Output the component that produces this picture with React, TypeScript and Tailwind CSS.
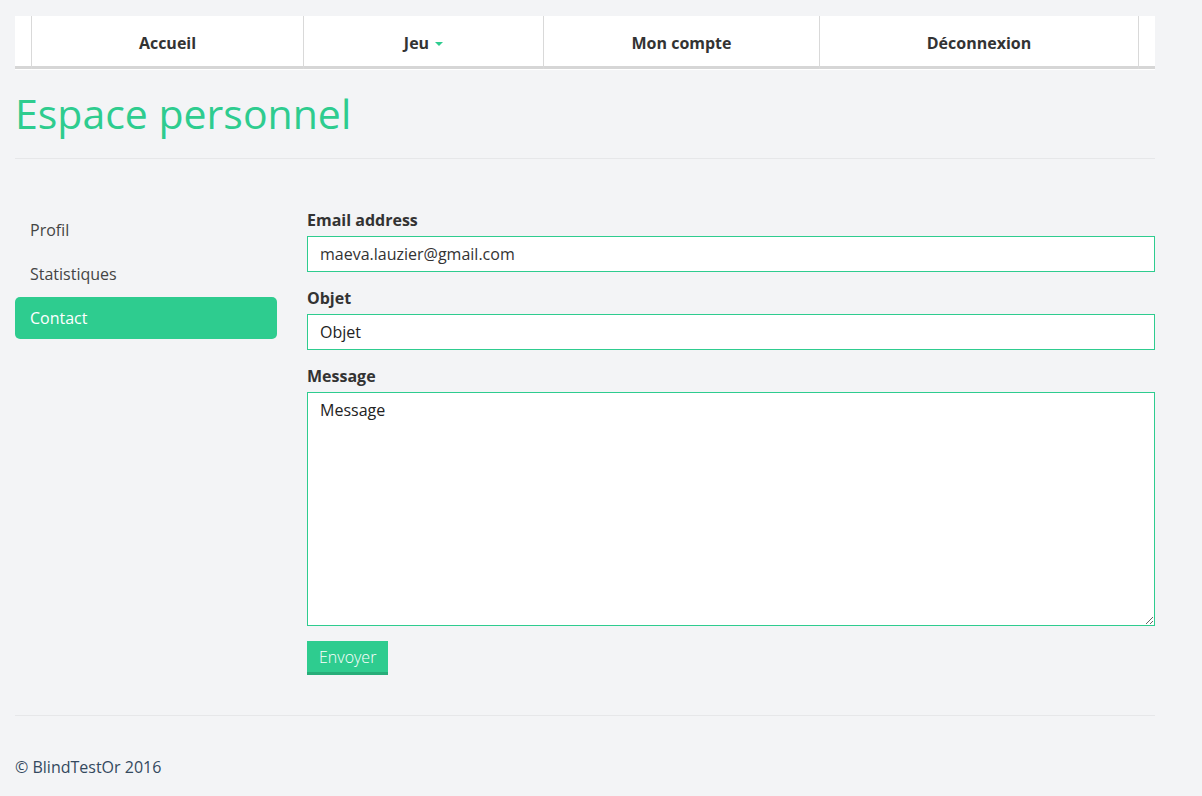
import React from "react";

const navItems = [
  { label: "Accueil", w: "w-[272px]" },
  { label: "Jeu", w: "w-[240px]", caret: true },
  { label: "Mon compte", w: "w-[276px]" },
  { label: "Déconnexion", w: "w-[319px]" },
];

export default function App() {
  return (
    <div
      className="min-h-[796px] bg-[#f3f4f6] text-[#333333] pt-4"
      style={{ fontFamily: '"Open Sans", "Noto Sans", sans-serif' }}
    >
      <div className="w-[1140px] ml-[15px]">
        {/* Navbar */}
        <div className="bg-white pb-px">
          <div className="flex h-[53px] border-b-[3px] border-[#d6d6d6]">
            <div className="w-[17px] border-r border-[#d9d9d9] -mb-[3px]" />
            {navItems.map((it) => (
              <div
                key={it.label}
                className={`${it.w} border-r border-[#d9d9d9] -mb-[3px] flex items-center justify-center text-[16px] font-bold text-[#333333]`}
              >
                <span>{it.label}</span>
                {it.caret && (
                  <span className="ml-[6px] mt-[2px] inline-block w-0 h-0 border-l-[4px] border-r-[4px] border-t-[4px] border-l-transparent border-r-transparent border-t-[#2ecc8f]" />
                )}
              </div>
            ))}
            <div className="flex-1" />
          </div>
        </div>

        {/* Page header */}
        <div className="mt-[20px] pb-[22px] border-b border-[#e6e7e9]">
          <h1 className="text-[41px] leading-[46px] font-normal text-[#2ecc8f]">
            Espace personnel
          </h1>
        </div>

        {/* Content */}
        <div className="flex mt-[50px]">
          <div className="w-[262px] flex flex-col gap-[2px] text-[16px]">
            <div className="h-[42px] px-[15px] flex items-center text-[#444]">Profil</div>
            <div className="h-[42px] px-[15px] flex items-center text-[#444]">Statistiques</div>
            <div className="h-[42px] px-[15px] flex items-center bg-[#2ecc8f] text-white rounded-[5px]">
              Contact
            </div>
          </div>
          <div className="ml-[30px] flex-1 flex flex-col">
            <label className="text-[16px] font-bold leading-[22px] mb-[5px]">Email address</label>
            <input
              readOnly
              value="maeva.lauzier@gmail.com"
              className="h-[36px] border border-[#2ecc8f] bg-white px-[12px] text-[16px] text-[#333] outline-none"
            />
            <label className="mt-[15px] text-[16px] font-bold leading-[22px] mb-[5px]">Objet</label>
            <input
              readOnly
              value="Objet"
              className="h-[36px] border border-[#2ecc8f] bg-white px-[12px] text-[16px] text-[#222] outline-none"
            />
            <label className="mt-[15px] text-[16px] font-bold leading-[22px] mb-[5px]">Message</label>
            <textarea
              readOnly
              value="Message"
              className="h-[234px] border border-[#2ecc8f] bg-white px-[12px] py-[6px] text-[16px] leading-[22px] text-[#222] outline-none"
            />
            <div className="mt-[15px]">
              <button className="h-[34px] px-[12px] bg-[#2ecc8f] border-b-[3px] border-[#27ad79] text-white text-[16px] font-light leading-[33px]">
                Envoyer
              </button>
            </div>
          </div>
        </div>

        {/* Footer */}
        <div className="mt-[40px] border-t border-[#e6e7e9] pt-[39px] text-[16px] text-[#34495e]">
          © BlindTestOr 2016
        </div>
      </div>
    </div>
  );
}
